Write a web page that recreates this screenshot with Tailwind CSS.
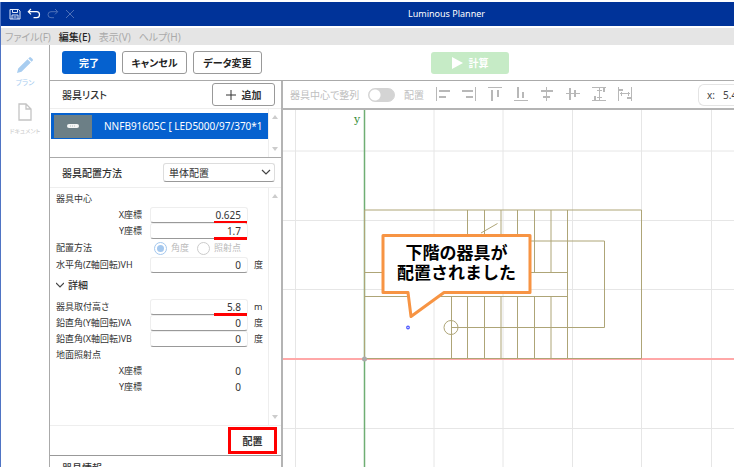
<!DOCTYPE html>
<html lang="ja">

<head>
    <meta charset="UTF-8">
    <meta name="viewport" content="width=device-width, initial-scale=1.0">
    <title>Luminous Planner</title>
    <script src="https://cdn.jsdelivr.net/npm/@tailwindcss/browser@4"></script>
</head>

<body class="h-screen overflow-hidden bg-white pt-0.5 pr-1.5 pb-[5px] font-['Noto_Sans','Noto_Sans_CJK_JP',sans-serif] [font-feature-settings:'palt'] text-[10px] leading-4 text-[#333]">
    <div class="flex h-full flex-col overflow-hidden border-l border-[#4f74c4]">
        <!-- Title bar -->
        <header class="flex h-6 shrink-0 items-center bg-[#003399] pl-2 text-white">
            <div class="flex items-center gap-1.5">
                <button type="button" aria-label="保存">
                    <svg class="size-3" viewBox="0 0 12 12" fill="none" stroke="#dfe7f8"><path d="M1 1.500h8.500l1.500 1.500v8h-10zM3.500 1.500v3h5v-3M3 11V7h6v4M4.500 9h3" /></svg>
                </button>
                <button type="button" aria-label="元に戻す">
                    <svg class="h-3 w-3.5" viewBox="0 0 14 12" fill="none" stroke="#fff" stroke-width="1.200"><path d="M4 1L1.300 3.700L4 6.400M1.300 3.700H9.500a3 3 0 0 1 0 6H6.500" /></svg>
                </button>
                <button type="button" aria-label="やり直し" disabled>
                    <svg class="size-3" viewBox="0 0 12 12" fill="none" stroke="#4d70b8"><path d="M8 1l2.700 2.700L8 6.400M10.700 3.700H4a3 3 0 0 0 0 6h3" /></svg>
                </button>
                <button type="button" aria-label="削除" disabled>
                    <svg class="size-2.5" viewBox="0 0 10 10" fill="none" stroke="#4d70b8"><path d="M1 1l8 8M9 1L1 9" /></svg>
                </button>
            </div>
            <h1 class="flex-1 pl-[84px] text-center text-[9px]">Luminous Planner</h1>
        </header>

        <!-- Menu -->
        <nav class="mt-0.5 flex h-[17px] shrink-0 items-center gap-2 bg-[#e5e5e5] pl-1 text-[10px] text-[#aaa]">
            <a href="#">ファイル(F)</a>
            <a href="#" class="font-medium text-[#222]">編集(E)</a>
            <a href="#">表示(V)</a>
            <a href="#">ヘルプ(H)</a>
        </nav>

        <div class="flex min-h-0 flex-1">
            <aside class="flex w-12 shrink-0 flex-col items-center pt-3 text-[8px] leading-3 text-[#c8c8c8]">
                <a href="#" class="flex flex-col items-center gap-1 text-[7px] text-[#a8cdf0]">
                    <svg class="size-4" viewBox="0 0 16 16" fill="#a8cdf0"><path d="M0 16l1.200-4.500L10.500 2.200l3.300 3.300L4.500 14.800zM11.300 1.400l1-1q.8-.7 1.600 0l1.700 1.700q.7.800 0 1.600l-1 1z" /></svg>
                    プラン
                </a>
                <a href="#" class="mt-3.5 flex flex-col items-center gap-1 text-[6px]">
                    <svg class="h-[18px] w-3.5" viewBox="0 0 14 18" fill="none" stroke="#c4c4c4" stroke-width="1.300"><path d="M1 1h7l5 5v11H1zM8 1v5h5" /></svg>
                    ドキュメント
                </a>
            </aside>

            <main class="flex min-w-0 flex-1 flex-col border-l border-[#aaa]">
                <div class="flex h-9 shrink-0 items-center gap-1.5 border-b border-[#aaa] pl-3 text-[10px] font-bold text-[#222]">
                    <button type="button" class="h-[23px] w-[54px] rounded-[3px] bg-[#0561cf] text-white">完了</button>
                    <button type="button" class="h-[23px] w-[65px] rounded-[3px] border border-[#999]">キャンセル</button>
                    <button type="button" class="h-[23px] w-[69px] rounded-[3px] border border-[#999]">データ変更</button>
                    <div class="flex flex-1 justify-center pr-[62px]">
                        <button type="button" disabled class="flex h-[22px] w-[78px] items-center justify-center gap-1.5 rounded-[3px] bg-[#c6ebc6] text-white">
                            <svg class="h-3 w-[11px]" viewBox="0 0 11 12" fill="#fff"><path d="M0 0l11 6l-11 6z" /></svg>
                            計算
                        </button>
                    </div>
                </div>

                <div class="flex min-h-0 flex-1">
                    <!-- Fixture panel -->
                    <section class="flex w-[233px] shrink-0 flex-col border-r-2 border-[#b4b4b4]">
                        <div class="flex h-7 shrink-0 items-center justify-between border-b border-[#eee] pr-1.5 pl-3 text-[10px]">
                            <h2 class="font-medium">器具リスト</h2>
                            <button type="button" class="flex h-[23px] w-[63px] items-center justify-center gap-1.5 rounded-[3px] border border-[#999] font-bold">
                                <svg class="size-2.5" viewBox="0 0 10 10" stroke="#333"><path d="M0 5h10M5 0v10" /></svg>
                                追加
                            </button>
                        </div>
                        <div class="flex h-[49px] shrink-0 border-b border-[#aaa]">
                            <div class="min-w-0 flex-1 border-r border-[#eee] pt-1 pl-px">
                                <button type="button" class="flex h-[26px] w-full items-center gap-3 bg-[#0561cf] pl-[3px] text-[10px] whitespace-nowrap text-white">
                                    <span class="flex h-[23px] w-[38px] shrink-0 items-center justify-center bg-[#6c7f86]">
                                        <svg class="h-1 w-3" viewBox="0 0 12 4"><rect width="12" height="4" rx="2" fill="#f3f5f5" /><path d="M3 2h6" stroke="#b9c2c5" stroke-dasharray="1 1" /></svg>
                                    </span>
                                    NNFB91605C [ LED5000/97/370*1
                                </button>
                            </div>
                            <div class="flex w-3 flex-col items-center justify-between py-1.5">
                                <svg class="h-1 w-1.5" viewBox="0 0 6 4" fill="#ccc"><path d="M0 4l3-4l3 4z" /></svg>
                                <svg class="h-1 w-1.5" viewBox="0 0 6 4" fill="#ccc"><path d="M0 0l3 4l3-4z" /></svg>
                            </div>
                        </div>

                        <div class="flex h-[30px] shrink-0 items-center justify-between border-b border-[#eee] pr-1.5 pl-3">
                            <label for="method" class="font-medium">器具配置方法</label>
                            <div class="relative">
                                <select id="method" class="h-[19px] w-28 appearance-none rounded-[3px] border border-[#ddd] border-b-[#999] pl-[5px] leading-4">
                                    <option>単体配置</option>
                                </select>
                                <svg class="pointer-events-none absolute top-1.5 right-1 h-1.5 w-2.5" viewBox="0 0 10 6" fill="none" stroke="#444" stroke-width="1.200"><path d="M1 1l4 4l4-4" /></svg>
                            </div>
                        </div>

                        <div class="flex min-h-0 flex-1 border-b border-[#eee]">
                            <form class="min-w-0 flex-1 border-r border-[#eee] pt-[3px] pl-1.5 text-[9px]">
                                <p class="h-4">器具中心</p>
                                <div class="relative flex h-4 items-center">
                                    <label for="cx" class="w-[94px] pr-2 text-right">X座標</label>
                                    <input id="cx" value="0.625" class="h-4 w-[98px] rounded-[3px] border border-[#eee] border-b-[#999] pr-1.5 text-right text-[10px]">
                                    <span class="absolute -bottom-px left-[158px] h-[3px] w-[33px] bg-[#ff0000]"></span>
                                </div>
                                <div class="relative flex h-4 items-center">
                                    <label for="cy" class="w-[94px] pr-2 text-right">Y座標</label>
                                    <input id="cy" value="1.7" class="h-4 w-[98px] rounded-[3px] border border-[#eee] border-b-[#999] pr-1.5 text-right text-[10px]">
                                    <span class="absolute -bottom-px left-[158px] h-[3px] w-[33px] bg-[#ff0000]"></span>
                                </div>
                                <div class="flex h-[18px] items-center text-[#bbb]">
                                    <span class="w-[98px] text-[#333]">配置方法</span>
                                    <input id="angle" type="radio" name="aim" checked disabled class="size-[13px] appearance-none rounded-full border border-[#a5c8ee] bg-[#a5c8ee] bg-clip-content p-0.5">
                                    <label for="angle" class="mr-2 ml-1">角度</label>
                                    <input id="point" type="radio" name="aim" disabled class="size-[13px] appearance-none rounded-full border border-[#ccc]">
                                    <label for="point" class="ml-1">照射点</label>
                                </div>
                                <div class="flex h-4 items-center">
                                    <label for="vh" class="w-[94px] whitespace-nowrap">水平角(Z軸回転)VH</label>
                                    <input id="vh" value="0" class="h-4 w-[98px] rounded-[3px] border border-[#eee] border-b-[#999] pr-1.5 text-right text-[10px]">
                                    <span class="pl-1.5">度</span>
                                </div>
                                <button type="button" class="mb-0.5 flex h-6 items-center gap-1 text-[10px] font-medium">
                                    <svg class="h-1.5 w-2" viewBox="0 0 8 6" fill="none" stroke="#444" stroke-width="1.200"><path d="M0 1l4 4l4-4" /></svg>
                                    詳細
                                </button>
                                <div class="relative flex h-4 items-center">
                                    <label for="height" class="w-[94px]">器具取付高さ</label>
                                    <input id="height" value="5.8" class="h-4 w-[98px] rounded-[3px] border border-[#eee] border-b-[#999] pr-1.5 text-right text-[10px]">
                                    <span class="pl-1.5">m</span>
                                    <span class="absolute -bottom-px left-[158px] h-[3px] w-[33px] bg-[#ff0000]"></span>
                                </div>
                                <div class="flex h-4 items-center">
                                    <label for="va" class="w-[94px] whitespace-nowrap">鉛直角(Y軸回転)VA</label>
                                    <input id="va" value="0" class="h-4 w-[98px] rounded-[3px] border border-[#eee] border-b-[#999] pr-1.5 text-right text-[10px]">
                                    <span class="pl-1.5">度</span>
                                </div>
                                <div class="flex h-4 items-center">
                                    <label for="vb" class="w-[94px] whitespace-nowrap">鉛直角(X軸回転)VB</label>
                                    <input id="vb" value="0" class="h-4 w-[98px] rounded-[3px] border border-[#eee] border-b-[#999] pr-1.5 text-right text-[10px]">
                                    <span class="pl-1.5">度</span>
                                </div>
                                <p class="h-4">地面照射点</p>
                                <div class="flex h-4 items-center">
                                    <span class="w-[94px] pr-2 text-right">X座標</span>
                                    <output class="w-[98px] pr-[7px] text-right text-[10px]">0</output>
                                </div>
                                <div class="flex h-4 items-center">
                                    <span class="w-[94px] pr-2 text-right">Y座標</span>
                                    <output class="w-[98px] pr-[7px] text-right text-[10px]">0</output>
                                </div>
                            </form>
                            <div class="flex w-3 flex-col items-center justify-between py-1.5">
                                <svg class="h-1 w-1.5" viewBox="0 0 6 4" fill="#ccc"><path d="M0 4l3-4l3 4z" /></svg>
                                <svg class="h-1 w-1.5" viewBox="0 0 6 4" fill="#ccc"><path d="M0 0l3 4l3-4z" /></svg>
                            </div>
                        </div>

                        <div class="flex h-[30px] shrink-0 items-center justify-end border-b border-[#999] pr-1">
                            <button type="button" class="h-[27px] w-[49px] border-3 border-[#ff0000] font-bold">配置</button>
                        </div>
                        <div class="h-[11px] shrink-0 overflow-hidden pt-1 pl-3 font-medium">
                            <h2>器具情報</h2>
                        </div>
                    </section>

                    <!-- Drawing area -->
                    <section class="flex min-w-0 flex-1 flex-col">
                        <div class="flex h-[29px] shrink-0 items-center overflow-hidden border-b-2 border-[#b4b4b4] pl-[7px] text-[#c0c0c0]">
                            <label for="snap" class="w-[78px] shrink-0 whitespace-nowrap">器具中心で整列</label>
                            <input id="snap" type="checkbox" disabled class="h-3.5 w-[27px] shrink-0 appearance-none rounded-full border border-[#d4d4d4] bg-[radial-gradient(circle_at_6px_6px,#fff_5px,#d4d4d4_6px)]">
                            <span class="mr-3 ml-[9px] w-5 shrink-0 whitespace-nowrap">配置</span>
                            <div class="flex shrink-0 gap-[11px]">
                                <button type="button" disabled aria-label="左揃え"><svg class="size-[15px]" viewBox="0 0 15 15" fill="#b8b8b8"><path d="M0 0h1v14h-1zM3 3h11v2H3zM3 9h7v2H3z" /></svg></button>
                                <button type="button" disabled aria-label="右揃え"><svg class="size-[15px]" viewBox="0 0 15 15" fill="#b8b8b8"><path d="M13 0h1v14h-1zM0 3h11v2H0zM4 9h7v2H4z" /></svg></button>
                                <button type="button" disabled aria-label="上揃え"><svg class="size-[15px]" viewBox="0 0 15 15" fill="#b8b8b8"><path d="M0 0h14v1H0zM3 3h2v11H3zM9 3h2v7H9z" /></svg></button>
                                <button type="button" disabled aria-label="下揃え"><svg class="size-[15px]" viewBox="0 0 15 15" fill="#b8b8b8"><path d="M0 13h14v1H0zM3 0h2v11H3zM8 5h2v6H8z" /></svg></button>
                                <button type="button" disabled aria-label="左右中央"><svg class="size-[15px]" viewBox="0 0 15 15" fill="#b8b8b8"><path d="M6 0h1v14H6zM1 3h12v2H1zM3 9h7v2H3z" /></svg></button>
                                <button type="button" disabled aria-label="上下中央"><svg class="size-[15px]" viewBox="0 0 15 15" fill="#b8b8b8"><path d="M0 6h14v1H0zM3 1h2v12H3zM8 3h2v7H8z" /></svg></button>
                                <button type="button" disabled aria-label="上下均等"><svg class="size-[15px]" viewBox="0 0 15 15" fill="#b8b8b8"><path d="M0 0h14v1H0zM0 13h14v1H0zM2 9h2v4H2zM11 1h2v4h-2zM7 1h1v12H7zM5 3h5v1H5zM5 10h5v1H5z" /></svg></button>
                                <button type="button" disabled aria-label="左右均等"><svg class="size-[15px]" viewBox="0 0 15 15" fill="#b8b8b8"><path d="M0 0h1v14H0zM13 0h1v14h-1zM1 2h4v2H1zM9 10h4v2H9zM2 6h10v1H2zM3 5h1v4H3zM10 5h1v4h-1z" /></svg></button>
                            </div>
                            <div class="ml-auto flex h-[22px] w-9 shrink-0 items-center gap-2 overflow-hidden rounded-l-md border border-r-0 border-[#e4e4e4] pl-2 whitespace-nowrap text-[#444]">
                                <span>x:</span>
                                <output>5.4</output>
                            </div>
                        </div>
                        <div class="relative min-h-0 flex-1 overflow-hidden">
                            <svg class="h-full w-full" viewBox="283 110 451 357" preserveAspectRatio="xMinYMin slice" fill="none">
                                <g stroke="#e6e6e6">
                                    <path d="M295.500 110v358M434 110v358M503 110v358M572.500 110v358M641.500 110v358M711.500 110v358" />
                                    <path d="M283 151H734M283 220.500H734M283 289.500H734M283 428.500H734" />
                                </g>
                                <path d="M283 359H734" stroke="#ffa8a8" stroke-width="2" />
                                <path d="M364.500 110v358" stroke="#6fae74" stroke-width="1.500" />
                                <g stroke="#aea577">
                                    <path d="M364.500 210H641.500V358.500H364.500z" />
                                    <path d="M364.500 272.500H567.500M364.500 296.500H567.500M567.500 210V358.500" />
                                    <path d="M467.500 210v62.500M484.500 210v62.500M501 210v62.500M517.500 210v62.500M534.500 210v62.500M551 210v62.500" />
                                    <path d="M451.500 296.500v62M467.500 296.500v62M484.500 296.500v62M501 296.500v62M517.500 296.500v62M534.500 296.500v62M551 296.500v62" />
                                    <path d="M451.500 327.500H604.500V241H451.500M481 233l16.500-9.500" />
                                    <circle cx="451" cy="327.500" r="7" />
                                </g>
                                <circle cx="364.500" cy="359" r="2.500" fill="#aaa" />
                                <circle cx="408" cy="327.500" r="1.300" stroke="#4a55ff" stroke-width="1.200" />
                                <path d="M383 235.500H530V292.500H444L411 316.500L408 292.500H383z" fill="#fff" stroke="#f79443" stroke-width="3" stroke-linejoin="round" />
                            </svg>
                            <span class="absolute top-0.5 left-[71px] font-['DejaVu_Serif',serif] text-[11px] text-[#2f8a32]">y</span>
                            <p class="absolute top-[132px] left-[101px] w-[145px] text-center font-['Noto_Sans_CJK_JP',sans-serif] text-[17px] leading-5 font-bold text-black [font-feature-settings:normal]">下階の器具が<br>配置されました</p>
                        </div>
                    </section>
                </div>
            </main>
        </div>
    </div>
</body>

</html>
